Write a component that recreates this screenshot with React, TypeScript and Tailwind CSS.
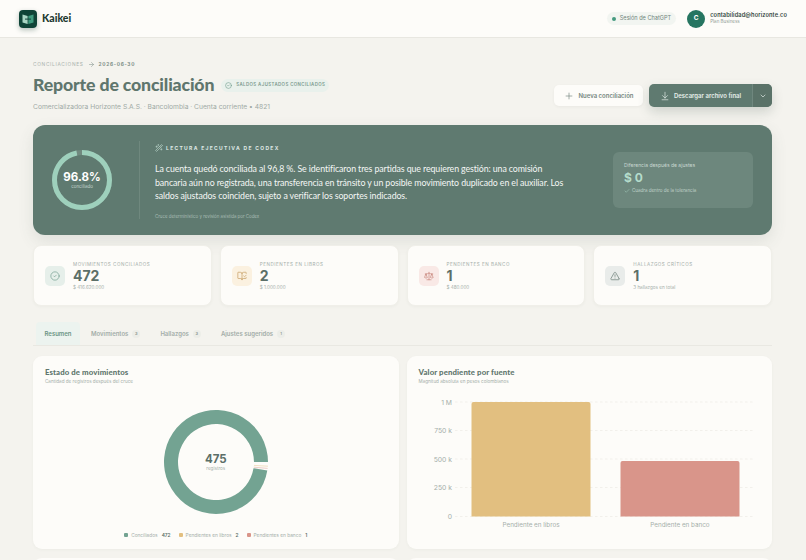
import { ArrowDownToLine, ArrowRight, BookOpenCheck, Check, ChevronDown, CircleCheck, Plus, Scale, TriangleAlert, WandSparkles } from "lucide-react";

const inter = "font-['Inter',sans-serif]";
const lato = "font-['Lato',sans-serif]";

const stats = [
  { label: "MOVIMIENTOS CONCILIADOS", value: "472", sub: "$ 416.620.000", icon: CircleCheck, box: "bg-[#e6efea]", color: "text-[#6f9c8c]" },
  { label: "PENDIENTES EN LIBROS", value: "2", sub: "$ 1.000.000", icon: BookOpenCheck, box: "bg-[#fbf1e0]", color: "text-[#c49a5c]" },
  { label: "PENDIENTES EN BANCO", value: "1", sub: "$ 480.000", icon: Scale, box: "bg-[#f9e9e6]", color: "text-[#c58478]" },
  { label: "HALLAZGOS CRÍTICOS", value: "1", sub: "3 hallazgos en total", icon: TriangleAlert, box: "bg-[#e9ecea]", color: "text-[#62766e]" },
];

const tabs = [
  { label: "Movimientos", count: 3 },
  { label: "Hallazgos", count: 3 },
  { label: "Ajustes sugeridos", count: 1 },
];

function Logo() {
  return (
    <svg viewBox="0 0 18 18" className="w-[18px] h-[18px] rounded-[4px] shadow-[0_2px_5px_rgba(15,60,48,0.3)]">
      <rect width="18" height="18" fill="#0f4437" />
      <path d="M3.5 4.5 L8.6 6 V14 L3.5 12.6 Z" fill="#a9d6c4" />
      <path d="M14.5 4.5 L9.4 6 V14 L14.5 12.6 Z" fill="#3f9c7f" />
      <rect x="6" y="8.6" width="6" height="1" fill="#0f4437" />
    </svg>
  );
}

function Header() {
  return (
    <header className="h-[38px] shrink-0 bg-[#fdfcf9] border-b border-[#e8e7e1] flex items-center justify-between pl-[19px] pr-[19px]">
      <div className="flex items-center gap-[5px]">
        <Logo />
        <span className={`${lato} text-[10.5px] font-black text-[#1d3a31]`}>Kaikei</span>
      </div>
      <div className="flex items-center">
        <div className={`${inter} flex items-center gap-[4px] h-[13px] px-[5px] rounded-full bg-[#f2f5f1] text-[5.6px] text-[#71857d] mr-[11px]`}>
          <span className="w-[4px] h-[4px] rounded-full bg-[#459a7f]" />
          Sesión de ChatGPT
        </div>
        <div className="w-[18px] h-[18px] rounded-full bg-[#267561] text-white text-[6.5px] font-bold flex items-center justify-center mr-[5px]">
          <span className={inter}>C</span>
        </div>
        <div className={`${inter} flex flex-col leading-none`}>
          <span className="text-[5.7px] font-semibold text-[#33473f] tracking-[0.1px]">contabilidad@horizonte.co</span>
          <span className="text-[4.5px] text-[#8d9a94] mt-[2.5px]">Plan Business</span>
        </div>
      </div>
    </header>
  );
}

function PageTitle() {
  return (
    <div className="flex items-start justify-between mt-[23px]">
      <div>
        <div className={`${inter} flex items-center gap-[4px] text-[4.8px] h-[7px] tracking-[0.7px]`}>
          <span className="text-[#a9b2ad]">CONCILIACIONES</span>
          <ArrowRight className="w-[7px] h-[7px] text-[#8c9a94]" />
          <span className="font-bold text-[#7d8f88]">2026-06-30</span>
        </div>
        <div className="flex items-center mt-[5px]">
          <h1 className={`${lato} text-[17.7px] leading-[24px] font-black text-[#5f766d] tracking-[-0.15px]`}>Reporte de conciliación</h1>
          <div className={`${inter} flex items-center gap-[4px] h-[13px] px-[4px] ml-[7px] rounded-full bg-[#e9f1ec] text-[4.4px] font-semibold tracking-[0.4px] text-[#7b9a8d]`}>
            <CircleCheck className="w-[7px] h-[7px] text-[#6f9c8c]" />
            SALDOS AJUSTADOS CONCILIADOS
          </div>
        </div>
        <p className={`${inter} text-[6.7px] leading-[10px] mt-[5px] text-[#a0aaa5]`}>Comercializadora Horizonte S.A.S. · Bancolombia · Cuenta corriente • 4821</p>
      </div>
      <div className={`${inter} flex items-center gap-[6px] mt-[23px]`}>
        <button className="w-[89px] h-[21px] rounded-[5px] bg-[#fdfcf9] flex items-center justify-center gap-[5px] text-[6px] font-semibold text-[#75877f] shadow-[0_1px_3px_rgba(60,70,60,0.06)]">
          <Plus className="w-[10px] h-[10px]" strokeWidth={1.6} />
          Nueva conciliación
        </button>
        <div className="flex w-[123px] h-[23px] rounded-[5px] bg-[#5f7a70] text-[#e6eeea] shadow-[0_5px_12px_rgba(60,80,70,0.2)] overflow-hidden">
          <button className="flex-1 flex items-center justify-center gap-[4px] text-[6px] font-semibold">
            <ArrowDownToLine className="w-[10px] h-[10px]" strokeWidth={1.6} />
            Descargar archivo final
          </button>
          <button className="w-[20px] border-l border-[#6f877e] bg-[#5a7268] flex items-center justify-center">
            <ChevronDown className="w-[8px] h-[8px]" />
          </button>
        </div>
      </div>
    </div>
  );
}

function Hero() {
  return (
    <section className="h-[110px] mt-[13px] rounded-[12px] bg-[#5f7a70] flex items-center shadow-[0_6px_16px_rgba(70,90,80,0.12)]">
      <div className="relative w-[60px] h-[60px] ml-[19px] shrink-0">
        <svg viewBox="0 0 60 60" className="w-[60px] h-[60px] -rotate-90">
          <circle cx="30" cy="30" r="27.5" fill="none" stroke="#71897f" strokeWidth="5" />
          <circle cx="30" cy="30" r="27.5" fill="none" stroke="#9ed0bc" strokeWidth="5" strokeDasharray="167.3 172.8" />
        </svg>
        <div className="absolute inset-0 flex flex-col items-center justify-center">
          <span className={`${inter} text-[11.5px] leading-[13px] font-bold text-white`}>96.8%</span>
          <span className={`${inter} text-[4.5px] leading-[6px] text-[#c4d6cf]`}>conciliado</span>
        </div>
      </div>
      <div className="self-center w-px h-[78px] bg-[#6f887e] ml-[27px] shrink-0" />
      <div className="ml-[15px] w-[412px] pt-[4px] shrink-0">
        <div className={`${inter} flex items-center gap-[3px] h-[8px] text-[5px] font-bold tracking-[1.3px] text-[#dfe9e5]`}>
          <WandSparkles className="w-[8px] h-[8px] text-[#b9d3c8]" />
          LECTURA EJECUTIVA DE CODEX
        </div>
        <p className={`${lato} text-[8.8px] leading-[13.5px] tracking-[-0.1px] text-[#f4f6f4] mt-[10px]`}>
          La cuenta quedó conciliada al 96,8 %. Se identificaron tres partidas que requieren gestión: una comisión bancaria aún no registrada, una transferencia en tránsito y un posible movimiento duplicado en el auxiliar. Los saldos ajustados coinciden, sujeto a verificar los soportes indicados.
        </p>
        <p className={`${inter} text-[4.4px] leading-[6px] text-[#a9bdb5] mt-[11px]`}>Cruce determinístico y revisión asistida por Codex</p>
      </div>
      <div className={`${inter} w-[140px] h-[56px] ml-auto mr-[19px] rounded-[6px] bg-[#6d877d] pl-[11px] pt-[10px] shrink-0`}>
        <div className="text-[5px] leading-[6px] text-[#c9d8d2]">Diferencia después de ajustes</div>
        <div className="text-[12px] leading-[14px] font-bold text-[#b4dccb] mt-[3px]">$ 0</div>
        <div className="flex items-center gap-[2px] text-[4.5px] leading-[6px] text-[#c0d3cb] mt-[3px]">
          <Check className="w-[6px] h-[6px] text-[#a9d3c2]" />
          Cuadra dentro de la tolerancia
        </div>
      </div>
    </section>
  );
}

function Stats() {
  return (
    <div className="grid grid-cols-4 gap-2 mt-[10px]">
      {stats.map((s) => (
        <div key={s.label} className="h-[61px] rounded-[8px] bg-[#fdfcf9] border border-[#f0efe9] flex items-center pl-[11px] shadow-[0_1px_3px_rgba(60,70,60,0.04)]">
          <div className={`w-[20px] h-[20px] rounded-[5px] flex items-center justify-center ${s.box}`}>
            <s.icon className={`w-[10px] h-[10px] ${s.color}`} strokeWidth={1.6} />
          </div>
          <div className={`${inter} ml-[8px] pt-[2px]`}>
            <div className="text-[4.6px] leading-[6px] tracking-[0.5px] text-[#a5afaa]">{s.label}</div>
            <div className="text-[14px] leading-[16px] font-bold text-[#5c6f68]">{s.value}</div>
            <div className="text-[4.6px] leading-[6px] text-[#a5afaa] mt-[1px]">{s.sub}</div>
          </div>
        </div>
      ))}
    </div>
  );
}

function Tabs() {
  return (
    <div className={`${inter} flex items-stretch h-[24px] mt-[16px] border-b border-[#e9e8e2] pl-[3px]`}>
      <div className="w-[44px] rounded-t-[4px] bg-[#ecf3ef] flex items-center justify-center text-[6px] font-semibold text-[#6b9384]">Resumen</div>
      {tabs.map((t, i) => (
        <div key={t.label} className={`flex items-center gap-[4px] text-[6px] font-semibold text-[#a3ada8] ${i === 0 ? "ml-[11px]" : "ml-[20px]"}`}>
          {t.label}
          <span className="w-[8px] h-[8px] rounded-full bg-[#ecede8] text-[4px] text-[#8c9993] flex items-center justify-center">{t.count}</span>
        </div>
      ))}
    </div>
  );
}

function StatusDonut() {
  const legend = [
    { label: "Conciliados", n: 472, dot: "bg-[#73a392]" },
    { label: "Pendientes en libros", n: 2, dot: "bg-[#e2bf80]" },
    { label: "Pendientes en banco", n: 1, dot: "bg-[#d9958a]" },
  ];
  return (
    <div className="h-[193px] rounded-[9px] bg-[#fdfcf9] pt-[11px] pl-[12px] shadow-[0_1px_3px_rgba(60,70,60,0.04)]">
      <h3 className={`${lato} text-[7.8px] leading-[10px] font-black text-[#5f766d] tracking-[0.1px]`}>Estado de movimientos</h3>
      <p className={`${inter} text-[4.6px] leading-[6px] mt-[2px] text-[#a5afaa]`}>Cantidad de registros después del cruce</p>
      <div className="relative w-[106px] h-[106px] mx-auto mt-[24px] -translate-x-[6px]">
        <svg viewBox="0 0 106 106" className="w-[106px] h-[106px]">
          <path d="M105 53 A52 52 0 1 0 104.3 61.5 L90.5 59.2 A38 38 0 1 1 91 53 Z" fill="#73a392" />
          <path d="M91 56.4 L105 57.2" stroke="#e2bf80" strokeWidth="0.45" />
          <path d="M90.8 58.2 L104.6 59.4" stroke="#d9958a" strokeWidth="0.45" />
        </svg>
        <div className="absolute inset-0 flex flex-col items-center justify-center">
          <span className={`${inter} text-[11.5px] leading-[13px] font-bold text-[#5c6f68]`}>475</span>
          <span className={`${inter} text-[4.6px] leading-[6px] text-[#a5afaa]`}>registros</span>
        </div>
      </div>
      <div className={`${inter} flex justify-center gap-[8px] mt-[17px] pr-[12px] text-[4.8px] leading-[6px]`}>
        {legend.map((l) => (
          <div key={l.label} className="flex items-center text-[#a5afaa]">
            <span className={`w-[4px] h-[4px] rounded-[1px] mr-[3px] ${l.dot}`} />
            {l.label}
            <span className="font-semibold text-[#5c6f68] ml-[4px]">{l.n}</span>
          </div>
        ))}
      </div>
    </div>
  );
}

function PendingBars() {
  const ticks = [
    { label: "1 M", y: 11 },
    { label: "750 k", y: 39.5 },
    { label: "500 k", y: 68 },
    { label: "250 k", y: 96.5 },
    { label: "0", y: 125.5 },
  ];
  return (
    <div className="h-[193px] rounded-[9px] bg-[#fdfcf9] pt-[11px] pl-[12px] pr-[12px] shadow-[0_1px_3px_rgba(60,70,60,0.04)]">
      <h3 className={`${lato} text-[7.8px] leading-[10px] font-black text-[#5f766d] tracking-[0.1px]`}>Valor pendiente por fuente</h3>
      <p className={`${inter} text-[4.6px] leading-[6px] mt-[2px] text-[#a5afaa]`}>Magnitud absoluta en pesos colombianos</p>
      <svg viewBox="0 0 341 145" className="w-[341px] h-[145px] mt-[5.5px]">
        {ticks.map((t) => (
          <g key={t.label}>
            <line x1="36" x2="336" y1={t.y} y2={t.y} stroke="#ecebe5" strokeWidth="0.7" strokeDasharray="2.5 2.5" />
            <text x="33" y={t.y + 2.5} textAnchor="end" fontSize="6.8" fontFamily="Inter, sans-serif" fill="#a5afaa">{t.label}</text>
          </g>
        ))}
        <path d="M52.5 125.5 V13 a2 2 0 0 1 2 -2 H169.5 a2 2 0 0 1 2 2 V125.5 Z" fill="#e2bf80" />
        <path d="M201.5 125.5 V72 a2 2 0 0 1 2 -2 H318.5 a2 2 0 0 1 2 2 V125.5 Z" fill="#d9958a" />
        <text x="112" y="135.5" textAnchor="middle" fontSize="6.3" fontFamily="Inter, sans-serif" fill="#a5afaa">Pendiente en libros</text>
        <text x="261" y="135.5" textAnchor="middle" fontSize="6.3" fontFamily="Inter, sans-serif" fill="#a5afaa">Pendiente en banco</text>
      </svg>
    </div>
  );
}

export default function App() {
  return (
    <div className="h-[560px] overflow-hidden bg-[#f4f3ee] flex flex-col">
      <Header />
      <main className="pl-[33px] pr-[34px]">
        <PageTitle />
        <Hero />
        <Stats />
        <Tabs />
        <div className="grid grid-cols-2 gap-2 mt-[10px]">
          <StatusDonut />
          <PendingBars />
        </div>
        <div className="grid grid-cols-2 gap-2 mt-[9px]">
          <div className="h-[40px] rounded-[9px] bg-[#fdfcf9]" />
          <div className="h-[40px] rounded-[9px] bg-[#fdfcf9]" />
        </div>
      </main>
    </div>
  );
}
